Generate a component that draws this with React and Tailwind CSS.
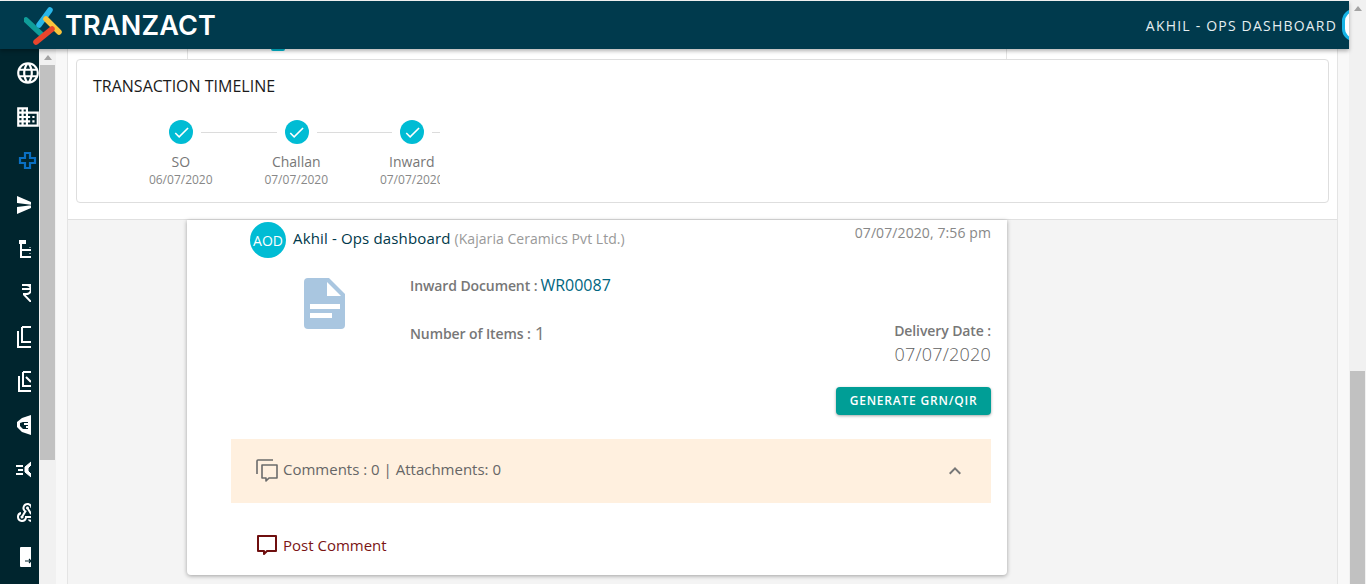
import React from "react";
import { MdLanguage, MdDomain, MdSend, MdCurrencyRupee, MdWebhook, MdCheck, MdKeyboardArrowUp } from "react-icons/md";

const steps = [
  { label: "SO", date: "06/07/2020" },
  { label: "Challan", date: "07/07/2020" },
  { label: "Inward", date: "07/07/2020" },
];

function Logo() {
  return (
    <svg width="40" height="40" viewBox="0 0 40 40" className="shrink-0">
      <g fill="none" strokeLinecap="round" strokeWidth="5.5">
        <path d="M2 15 L17 29" stroke="#0f9d9a" />
        <path d="M15 20 L26 5" stroke="#29b6e8" />
        <path d="M22 14 L35 27" stroke="#f9c43c" />
        <path d="M12 37 L28 24" stroke="#e8452c" />
      </g>
    </svg>
  );
}

function PageArrow({ up = true }) {
  return (
    <div className="h-[17px] flex items-center justify-center shrink-0">
      <div className={`w-0 h-0 border-x-[4px] border-x-transparent ${up ? "border-b-[5px] border-b-[#a3a3a3]" : "border-t-[5px] border-t-[#a3a3a3]"}`} />
    </div>
  );
}

function NavRow({ left, clip, children }) {
  return (
    <div className="h-[44px] flex items-center shrink-0" style={{ paddingLeft: left }}>
      <div className="overflow-hidden flex items-center" style={clip ? { width: clip } : undefined}>
        <div className="shrink-0">{children}</div>
      </div>
    </div>
  );
}

function NavIcons() {
  return (
    <div className="w-[39px] h-full bg-[#00252e] pt-[2px] shrink-0 text-white flex flex-col">
      <NavRow left={15}><MdLanguage size={26} /></NavRow>
      <NavRow left={15}><MdDomain size={26} /></NavRow>
      <NavRow left={18}>
        <svg width="20" height="20" viewBox="0 0 20 20" fill="none" stroke="#0a6fc2" strokeWidth="2.2">
          <path d="M7 2h5v5h5v5h-5v5H7v-5H2V7h5z" />
        </svg>
      </NavRow>
      <NavRow left={15} clip={16}><MdSend size={24} /></NavRow>
      <NavRow left={19} clip={12}>
        <svg width="12" height="18" viewBox="0 0 12 18" fill="none" stroke="#fff" strokeWidth="2">
          <rect x="0" y="0" width="7" height="4" fill="#fff" stroke="none" />
          <path d="M2 4v13h10M2 10h10" />
          <path d="M11 7v1M11 13v1" strokeWidth="1" />
        </svg>
      </NavRow>
      <NavRow left={16} clip={15}><MdCurrencyRupee size={24} /></NavRow>
      <NavRow left={16} clip={15}>
        <svg width="16" height="23" viewBox="0 0 16 23" fill="none" stroke="#fff" strokeWidth="2">
          <path d="M2 5v16h14" />
          <path d="M6 1v15h10M6 1h10" />
        </svg>
      </NavRow>
      <NavRow left={17} clip={14}>
        <svg width="15" height="21" viewBox="0 0 15 21" fill="none" stroke="#fff" strokeWidth="2">
          <path d="M2 5v15h13" />
          <path d="M6 1v14h9M6 1h9M9 6l5 5" />
        </svg>
      </NavRow>
      <NavRow left={17} clip={14}>
        <svg width="14" height="20" viewBox="0 0 14 20" fill="#fff">
          <path d="M0 7 5 3 14 0V20L5 17 0 12ZM3 8v3l3 3h5V7H6Z" fillRule="evenodd" />
          <path d="M7 8h4v2H7zM9 11h2v2H9z" />
        </svg>
      </NavRow>
      <NavRow left={16} clip={15}>
        <svg width="15" height="17" viewBox="0 0 15 17" fill="none" stroke="#fff">
          <path d="M0 5h7M2 9h5M0 13h7" strokeWidth="1.8" />
          <path d="M15 1 9 6v5l6 5V13l-3-3V7l3-3z" fill="#fff" strokeWidth="1" />
        </svg>
      </NavRow>
      <NavRow left={15} clip={16}><MdWebhook size={24} /></NavRow>
      <NavRow left={20} clip={11}>
        <svg width="12" height="20" viewBox="0 0 12 20">
          <path d="M1 0h10v5h1v15H1a1 1 0 0 1-1-1V1a1 1 0 0 1 1-1z" fill="#fff" />
          <path d="M5 14h6M9 12l2 2-2 2" fill="none" stroke="#00252e" strokeWidth="1.2" />
        </svg>
      </NavRow>
    </div>
  );
}

function Timeline() {
  return (
    <div className="border border-[#dedede] rounded-[4px] h-[144px] mx-[8px] pt-[15px] pl-[16px] bg-white">
      <div className="text-[16px] leading-[22px] text-[#1b1b1b]">TRANSACTION TIMELINE</div>
      <div className="w-[317px] overflow-hidden ml-[30px] mt-[23px]">
        <div className="flex items-center w-[400px] pl-[46px]">
          {steps.map((s) => (
            <React.Fragment key={s.label}>
              <div className="w-[24px] h-[24px] rounded-full bg-[#00bcd4] text-white flex items-center justify-center shrink-0">
                <MdCheck size={19} />
              </div>
              <div className="w-[75.5px] h-[1px] bg-[#dcdcdc] mx-[8px] shrink-0" />
            </React.Fragment>
          ))}
        </div>
        <div className="flex w-[400px] mt-[8px]">
          {steps.map((s) => (
            <div key={s.label} className="w-[115.5px] flex flex-col items-center shrink-0">
              <div className="text-[14px] leading-[20px] text-[#777]">{s.label}</div>
              <div className="text-[12px] leading-[15px] text-[#888]">{s.date}</div>
            </div>
          ))}
        </div>
      </div>
    </div>
  );
}

function FeedCard() {
  return (
    <div className="ml-[119px] w-[820px] h-[355px] bg-white rounded-b-[4px] shadow-[0_1px_4px_rgba(0,0,0,0.35)] pt-[2px] pl-[44px] pr-[16px]">
      <div className="flex items-start">
        <div className="w-[36px] h-[36px] ml-[19px] rounded-full bg-[#00bcd4] text-white text-[14px] flex items-center justify-center shrink-0">AOD</div>
        <div className="ml-[7px] mt-[5px] text-[15px] leading-[22px] tracking-[0.15px] text-[#00384a]">
          Akhil - Ops dashboard <span className="text-[14px] tracking-[0.05px] text-[#999]">(Kajaria Ceramics Pvt Ltd.)</span>
        </div>
        <div className="ml-auto mt-[1px] text-[14px] leading-[20px] text-[#888] tracking-[0.1px]">07/07/2020, 7:56 pm</div>
      </div>

      <div className="flex mt-[20px]">
        <div className="w-[179px] pl-[73px] shrink-0">
          <svg width="41" height="51" viewBox="0 0 41 51">
            <path d="M4 0h21l16 16v31a4 4 0 0 1-4 4H4a4 4 0 0 1-4-4V4a4 4 0 0 1 4-4z" fill="#a9c6e0" />
            <path d="M23 4v14h14z" fill="#fff" />
            <rect x="6" y="26" width="30" height="5" fill="#fff" />
            <rect x="6" y="35" width="22" height="5" fill="#fff" />
          </svg>
        </div>
        <div className="flex-1">
          <div className="flex items-center h-[20px] -mt-[3px]">
            <span className="text-[14px] font-semibold tracking-[-0.1px] text-[#777]">Inward Document :</span>
            <span className="ml-[3px] text-[16px] font-medium text-[#00667f]">WR00087</span>
          </div>
          <div className="flex justify-between mt-[26px]">
            <div className="flex items-center h-[24px]">
              <span className="text-[14px] font-semibold tracking-[-0.1px] text-[#777]">Number of Items :</span>
              <span className="ml-[4px] text-[18px] text-[#777]">1</span>
            </div>
            <div className="text-right">
              <div className="text-[14px] leading-[20px] font-semibold tracking-[-0.1px] text-[#777]">Delivery Date :</div>
              <div className="text-[18px] leading-[26px] font-light tracking-[0.2px] text-[#5f5f5f]">07/07/2020</div>
            </div>
          </div>
          <div className="flex justify-end mt-[20px]">
            <button className="w-[155px] h-[28px] bg-[#009e96] text-white text-[12px] font-semibold tracking-[0.8px] rounded-[4px] shadow-[0_1px_3px_rgba(0,0,0,0.35)]">GENERATE GRN/QIR</button>
          </div>
        </div>
      </div>

      <div className="h-[64px] mt-[24px] bg-[#fff0df] flex items-center pl-[25px] pr-[24px]">
        <svg width="22" height="24" viewBox="0 0 22 24" fill="none" stroke="#6b6b6b" strokeWidth="1.6" className="shrink-0">
          <path d="M1 15V2a1 1 0 0 1 1-1h15" />
          <path d="M6 6h15v13h-8l-3 3v-3H6z" strokeLinejoin="round" />
        </svg>
        <span className="ml-[5px] -mt-[4px] text-[15px] text-[#666]">Comments : 0 | Attachments: 0</span>
        <MdKeyboardArrowUp size={24} className="ml-auto text-[#777]" />
      </div>

      <div className="flex items-center mt-[32px] pl-[26px] text-[#7a1414]">
        <svg width="20" height="21" viewBox="0 0 20 21" fill="none" stroke="#6f0f0f" strokeWidth="2" className="shrink-0">
          <path d="M1 1h18v15H10l-3 3v-3H1z" strokeLinejoin="round" />
        </svg>
        <span className="ml-[6px] -mt-[1px] text-[15px] leading-[20px]">Post Comment</span>
      </div>
    </div>
  );
}

export default function App() {
  return (
    <div className="w-[1366px] h-[584px] overflow-hidden flex bg-[#f8f8f8] font-['Open_Sans',sans-serif]">
      <div className="w-[1349px] h-full flex flex-col shrink-0">
        {/* Header */}
        <header className="relative z-10 h-[48px] mt-[1px] shrink-0 bg-[#003a4d] shadow-[0_2px_4px_rgba(0,0,0,0.3)] flex items-center pl-[24px] overflow-hidden">
          <Logo />
          <span className="ml-[1px] text-[27px] font-semibold font-['Inter',sans-serif] text-white leading-none tracking-[0.2px]">TRANZACT</span>
          <span className="ml-auto text-[14px] font-medium text-[#e6eef0] tracking-[1.2px]">AKHIL - OPS DASHBOARD</span>
          <div className="w-[24px] h-[32px] ml-[5px] -mr-[17px] rounded-full border-[3px] border-[#16b4e6] bg-white shrink-0" />
        </header>

        <div className="flex-1 flex min-h-0">
          <NavIcons />
          {/* Nav scrollbar */}
          <div className="w-[17px] h-full bg-[#f1f1f1] flex flex-col shrink-0 px-[1px]">
            <PageArrow />
            <div className="h-[395px] bg-[#c1c1c1] -mt-[1px]" />
          </div>

          <div className="flex-1 px-[11px] min-w-0">
            <div className="h-full border-x border-[#e4e4e4] bg-[#f4f4f4]">
              {/* Sticky timeline */}
              <div className="bg-white h-[171px] border-b border-[#e0e0e0]">
                {/* Card scrolled under the timeline */}
                <div className="h-[10px] ml-[119px] w-[820px] border-x border-[#e4e4e4]">
                  <div className="h-[2px] w-[14px] ml-[83px] bg-[#00bcd4] rounded-b-full" />
                </div>
                <Timeline />
              </div>
              <FeedCard />
            </div>
          </div>
        </div>
      </div>

      {/* Page scrollbar */}
      <div className="w-[17px] h-full bg-[#f1f1f1] flex flex-col shrink-0 px-[1px]">
        <PageArrow />
        <div className="mt-[354px] flex-1 bg-[#c1c1c1]" />
      </div>
    </div>
  );
}
